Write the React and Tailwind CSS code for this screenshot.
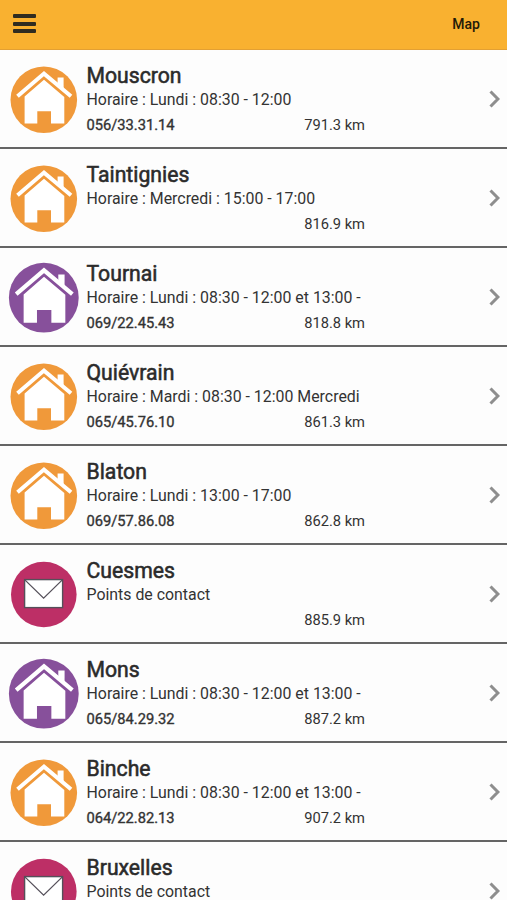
const locations = [
    { name: "Mouscron", info: "Horaire : Lundi : 08:30 - 12:00", phone: "056/33.31.14", distance: "791.3 km", type: "orange" },
    { name: "Taintignies", info: "Horaire : Mercredi : 15:00 - 17:00", phone: "", distance: "816.9 km", type: "orange" },
    { name: "Tournai", info: "Horaire : Lundi : 08:30 - 12:00 et 13:00 -", phone: "069/22.45.43", distance: "818.8 km", type: "purple" },
    { name: "Quiévrain", info: "Horaire : Mardi : 08:30 - 12:00 Mercredi", phone: "065/45.76.10", distance: "861.3 km", type: "orange" },
    { name: "Blaton", info: "Horaire : Lundi : 13:00 - 17:00", phone: "069/57.86.08", distance: "862.8 km", type: "orange" },
    { name: "Cuesmes", info: "Points de contact", phone: "", distance: "885.9 km", type: "contact" },
    { name: "Mons", info: "Horaire : Lundi : 08:30 - 12:00 et 13:00 -", phone: "065/84.29.32", distance: "887.2 km", type: "purple" },
    { name: "Binche", info: "Horaire : Lundi : 08:30 - 12:00 et 13:00 -", phone: "064/22.82.13", distance: "907.2 km", type: "orange" },
    { name: "Bruxelles", info: "Points de contact", phone: "", distance: "", type: "contact" },
];

function HouseIcon({ purple }) {
    return (
        <svg viewBox="8 14 72 72" className="h-[72px] w-[72px] shrink-0">
            <circle cx="43.8" cy="49.7" r={purple ? 34.9 : 33.3} fill={purple ? "#87509b" : "#f0993a"} />
            <g transform={purple ? "translate(43.8 49.7) scale(1.05) translate(-43.8 -49.7)" : undefined}>
                <path d="M57.6 27.6h6V40l-6-5z" fill="#fff" />
                <path d="M17.5 46.3 44 23.6 71 46.3" fill="none" stroke="#fff" strokeWidth="4" />
                <path d="M44 29.8 64.3 47v26.6H51V61.3H37.3v12.3H24.6V46.6z" fill="#fff" />
            </g>
        </svg>
    );
}

function EnvelopeIcon() {
    return (
        <svg viewBox="8 14 72 72" className="h-[72px] w-[72px] shrink-0">
            <circle cx="43.8" cy="49.5" r="32.8" fill="#bd2f66" />
            <rect x="24.6" y="34.6" width="38" height="28" fill="#fff" stroke="#55505a" strokeWidth="1.4" />
            <path d="m24.6 34.6 19 18.6 19-18.6" fill="none" stroke="#55505a" strokeWidth="1.3" />
        </svg>
    );
}

function LocationRow({ location }) {
    return (
        <li className="flex h-[99px] shrink-0 border-b-2 border-[#656565] bg-[#fdfdfd] pl-2 pr-1.5">
            <div className="pt-[14px]">
                {location.type === "contact" ? <EnvelopeIcon /> : <HouseIcon purple={location.type === "purple"} />}
            </div>
            <div className="ml-[6.5px] w-[278.5px] pt-[13px] text-[#333]">
                <h2 className="h-[26px] whitespace-nowrap text-[21.2px] leading-[26px] text-[#2b2b2b] [-webkit-text-stroke:0.55px_#2b2b2b]">{location.name}</h2>
                <p className="h-[22px] whitespace-nowrap text-[15.88px] leading-[22px]">{location.info}</p>
                <div className="mt-[3px] flex h-[22px] justify-between text-[14.7px] leading-[22px]">
                    <span className="[-webkit-text-stroke:0.35px_#333]">{location.phone}</span>
                    <span>{location.distance}</span>
                </div>
            </div>
            <svg viewBox="0 0 12 18" className="ml-auto mt-10 h-[18px] w-3" fill="none" stroke="#8e8e8e" strokeWidth="3">
                <path d="m1.5 1.5 7.4 7.5-7.4 7.5" />
            </svg>
        </li>
    );
}

export default function App() {
    return (
        <div className="h-[900px] w-full overflow-hidden bg-[#fdfdfd] font-['Roboto',sans-serif]">
            {/* Header */}
            <header className="flex h-[50px] items-center justify-between border-b border-[#e3a033] bg-[#f9b130] pl-[13px] pr-[27px]">
                <button aria-label="Menu" className="flex w-[23px] -translate-y-px flex-col gap-[3.5px]">
                    <span className="h-1 rounded-[1px] bg-[#302c20]" />
                    <span className="h-1 rounded-[1px] bg-[#302c20]" />
                    <span className="h-1 rounded-[1px] bg-[#302c20]" />
                </button>
                <button className="-translate-y-px text-sm font-medium text-[#231a08]">Map</button>
            </header>

            {/* Locations */}
            <ul>
                {locations.map((location) => (
                    <LocationRow key={location.name} location={location} />
                ))}
            </ul>
        </div>
    );
}
